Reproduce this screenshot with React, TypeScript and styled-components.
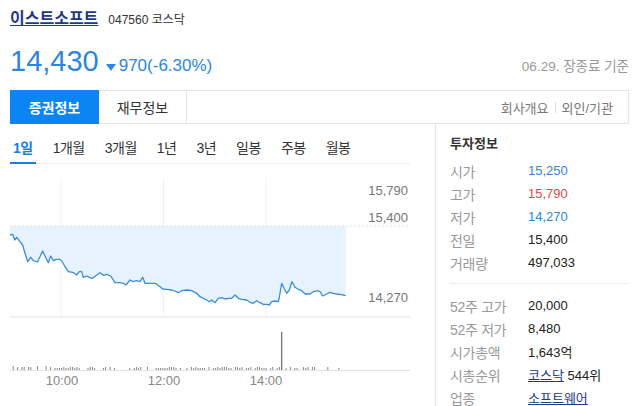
import styled, { createGlobalStyle } from "styled-components";

const GlobalStyle = createGlobalStyle`
  body {
    margin: 0;
    background: #fff;
    color: #333;
    font-family: "Liberation Sans", "Noto Sans CJK KR", sans-serif;
  }
`;

const BLUE = "#2d86e0";
const NAVY = "#1b3a87";

// price line traced from the reference (x, y in 1/3 px, y offset by 170)
const LINE: [number, number][] = [
  [30, 195], [38, 193], [44, 210], [50, 202], [60, 215], [68, 225], [75, 250], [83, 275],
  [92, 262], [100, 272], [112, 276], [120, 260], [128, 243], [135, 258], [145, 278],
  [152, 258], [160, 272], [168, 268], [178, 268], [185, 272], [195, 290], [205, 305],
  [218, 307], [230, 315], [238, 305], [245, 305], [250, 322], [260, 318], [268, 322],
  [278, 325], [290, 315], [300, 308], [310, 316], [320, 313], [332, 318], [345, 338],
  [358, 338], [370, 340], [378, 345], [390, 330], [400, 335], [410, 332], [420, 335],
  [428, 322], [435, 340], [450, 340], [465, 340], [480, 350], [488, 357], [500, 358],
  [515, 360], [525, 363], [535, 368], [545, 362], [560, 360], [575, 362], [590, 370],
  [600, 380], [610, 385], [620, 390], [628, 395], [635, 390], [645, 398], [655, 385],
  [665, 383], [675, 387], [685, 385], [695, 385], [705, 375], [715, 385], [725, 388],
  [740, 390], [750, 397], [760, 400], [770, 392], [780, 398], [790, 403], [800, 403],
  [808, 405], [815, 395], [825, 393], [835, 395], [838, 382], [845, 340], [852, 355],
  [860, 370], [868, 360], [876, 335], [885, 352], [895, 358], [905, 362], [915, 372],
  [930, 372], [940, 365], [955, 362], [960, 365], [968, 378], [980, 372], [990, 367],
  [1000, 370], [1010, 372], [1020, 373], [1030, 375], [1037, 377],
];

const points = LINE.map(([x, y]) => [x / 3, y / 3 + 170]);
const linePath = points.map(([x, y], i) => `${i ? "L" : "M"}${x.toFixed(1)},${y.toFixed(1)}`).join(" ");
const last = points[points.length - 1];
const fillPath = `M10,226 L${last[0].toFixed(1)},226 ` +
  [...points].reverse().map(([x, y]) => `L${x.toFixed(1)},${y.toFixed(1)}`).join(" ") + " Z";

const volume = Array.from({ length: 150 }, (_, i) => {
  const x = 11 + i * 2.2;
  const r = Math.abs(Math.sin(i * 12.9898) * 43758.5453) % 1;
  const base = i < 20 ? 1 : 0;
  const h = r < 0.45 ? 0 : Math.round(base + 1 + r * r * 2.5);
  return { x, h };
}).filter((v) => v.h > 0);

const Page = styled.div`
  width: 642px;
  padding: 0 13px 0 10px;
  box-sizing: border-box;
`;

const TitleRow = styled.div`
  display: flex;
  align-items: baseline;
  gap: 10px;
  padding-top: 8px;
  height: 24px;
`;

const StockName = styled.a`
  font-size: 16px;
  font-weight: bold;
  color: ${NAVY};
  text-decoration: underline;
  line-height: 22px;
`;

const StockCode = styled.span`
  font-size: 12px;
  color: #333;
`;

const PriceRow = styled.div`
  display: flex;
  align-items: baseline;
  margin-top: 13px;
  height: 45px;
`;

const Price = styled.span`
  font-size: 29px;
  line-height: 32px;
  color: ${BLUE};
`;

const Change = styled.span`
  display: inline-flex;
  align-items: baseline;
  gap: 3px;
  margin-left: 7px;
  font-size: 17px;
  color: ${BLUE};
`;

const AsOf = styled.span`
  margin-left: auto;
  font-size: 13.5px;
  color: #999;
`;

const TabBar = styled.div`
  display: flex;
  height: 34px;
  border: 1px solid #e5e5e5;
  box-sizing: border-box;
`;

const Tab = styled.div<{ $active?: boolean }>`
  display: flex;
  align-items: center;
  justify-content: center;
  width: ${({ $active }) => ($active ? "89px" : "87px")};
  margin: ${({ $active }) => ($active ? "-1px 0 -1px -1px" : "0")};
  font-size: 14px;
  font-weight: ${({ $active }) => ($active ? "bold" : "normal")};
  color: ${({ $active }) => ($active ? "#fff" : "#333")};
  background: ${({ $active }) => ($active ? "#0b84f4" : "transparent")};
  border-right: ${({ $active }) => ($active ? "none" : "1px solid #e5e5e5")};
`;

const SideLinks = styled.div`
  display: flex;
  align-items: center;
  margin-left: auto;
  padding-right: 15px;
  font-size: 13px;
  color: #777;
`;

const Sep = styled.span`
  width: 1px;
  height: 11px;
  margin: 0 6px;
  background: #ddd;
`;

const Body = styled.div`
  display: flex;
`;

const LeftPanel = styled.div`
  width: 425px;
`;

const PeriodBar = styled.div`
  display: flex;
  gap: 14px;
  width: 400px;
  border-bottom: 1px solid #ececec;
`;

const Period = styled.div<{ $active?: boolean }>`
  padding: 14px 3px 3px;
  margin-bottom: -1px;
  font-size: 14px;
  line-height: 21px;
  letter-spacing: -0.5px;
  color: ${({ $active }) => ($active ? "#1a7fe0" : "#333")};
  font-weight: ${({ $active }) => ($active ? "bold" : "normal")};
  border-bottom: 2px solid ${({ $active }) => ($active ? "#1a7fe0" : "transparent")};
`;

const ChartSvg = styled.svg`
  display: block;
  font-family: "Liberation Sans", sans-serif;
`;

const RightPanel = styled.div`
  flex: 1;
  height: 282px;
  border-left: 1px solid #e5e5e5;
  padding: 10px 0 0 14px;
`;

const Heading = styled.div`
  font-size: 13px;
  font-weight: bold;
  line-height: 20px;
  color: #333;
  margin-bottom: 5px;
`;

const Row = styled.div`
  display: grid;
  grid-template-columns: 78px 1fr;
  align-items: center;
  height: 23px;
`;

const Label = styled.span`
  font-size: 14px;
  letter-spacing: -0.3px;
  color: #999;
`;

const Value = styled.span<{ $tone?: "up" | "down" }>`
  font-size: 13px;
  color: ${({ $tone }) => ($tone === "up" ? "#e5484d" : $tone === "down" ? BLUE : "#222")};
`;

const ValueLink = styled.a`
  color: ${NAVY};
  text-decoration: underline;
`;

const Divider = styled.div`
  height: 1px;
  background: #ececec;
  margin: 9px 0 10px 0;
`;

const info: { label: string; value: string; tone?: "up" | "down" }[] = [
  { label: "시가", value: "15,250", tone: "down" },
  { label: "고가", value: "15,790", tone: "up" },
  { label: "저가", value: "14,270", tone: "down" },
  { label: "전일", value: "15,400" },
  { label: "거래량", value: "497,033" },
];

const periods = ["1일", "1개월", "3개월", "1년", "3년", "일봉", "주봉", "월봉"];

function Chart() {
  return (
    <ChartSvg width={425} height={232} viewBox="10 164 425 232">
      {[61, 163.5, 266].map((x) => (
        <line key={x} x1={x} y1={178} x2={x} y2={317} stroke="#f1f1f1" strokeWidth={1} />
      ))}
      <path d={fillPath} fill="#e6f2fd" />
      <line x1={10} y1={226} x2={410} y2={226} stroke="#d8d8d8" strokeWidth={0.8} strokeDasharray="2 2" />
      <path d={linePath} fill="none" stroke="#3a8ce0" strokeWidth={1.3} strokeLinejoin="round" />
      <line x1={10} y1={317} x2={410} y2={317} stroke="#ececec" strokeWidth={1.5} />
      <g fill="#777" fontSize={13} textAnchor="end">
        <text x={408} y={195}>15,790</text>
        <text x={408} y={222}>15,400</text>
        <text x={408} y={302}>14,270</text>
      </g>
      {volume.map((v) => (
        <line key={v.x} x1={v.x} y1={370} x2={v.x} y2={370 - v.h} stroke="#888" strokeWidth={1} />
      ))}
      <line x1={281.7} y1={370} x2={281.7} y2={332} stroke="#666" strokeWidth={1.2} />
      <line x1={10} y1={370.5} x2={410} y2={370.5} stroke="#e2e2e2" strokeWidth={1} />
      <g fill="#888" fontSize={13} textAnchor="middle">
        <text x={62} y={385}>10:00</text>
        <text x={164} y={385}>12:00</text>
        <text x={266} y={385}>14:00</text>
      </g>
    </ChartSvg>
  );
}

export default function App() {
  return (
    <Page>
      <GlobalStyle />
      <TitleRow>
        <StockName href="#">이스트소프트</StockName>
        <StockCode>047560 코스닥</StockCode>
      </TitleRow>
      <PriceRow>
        <Price>14,430</Price>
        <Change>
          <svg width="10" height="7" viewBox="0 0 10 7">
            <path d="M0,0 L10,0 L5,7 Z" fill={BLUE} />
          </svg>
          970(-6.30%)
        </Change>
        <AsOf>06.29. 장종료 기준</AsOf>
      </PriceRow>
      <TabBar>
        <Tab $active>증권정보</Tab>
        <Tab>재무정보</Tab>
        <SideLinks>
          회사개요<Sep />외인/기관
        </SideLinks>
      </TabBar>
      <Body>
        <LeftPanel>
          <PeriodBar>
            {periods.map((p, i) => (
              <Period key={p} $active={i === 0}>{p}</Period>
            ))}
          </PeriodBar>
          <Chart />
        </LeftPanel>
        <RightPanel>
          <Heading>투자정보</Heading>
          {info.map((r) => (
            <Row key={r.label}>
              <Label>{r.label}</Label>
              <Value $tone={r.tone}>{r.value}</Value>
            </Row>
          ))}
          <Divider />
          <Row>
            <Label>52주 고가</Label>
            <Value>20,000</Value>
          </Row>
          <Row>
            <Label>52주 저가</Label>
            <Value>8,480</Value>
          </Row>
          <Row>
            <Label>시가총액</Label>
            <Value>1,643억</Value>
          </Row>
          <Row>
            <Label>시총순위</Label>
            <Value>
              <ValueLink href="#">코스닥</ValueLink> 544위
            </Value>
          </Row>
          <Row>
            <Label>업종</Label>
            <Value>
              <ValueLink href="#">소프트웨어</ValueLink>
            </Value>
          </Row>
        </RightPanel>
      </Body>
    </Page>
  );
}
